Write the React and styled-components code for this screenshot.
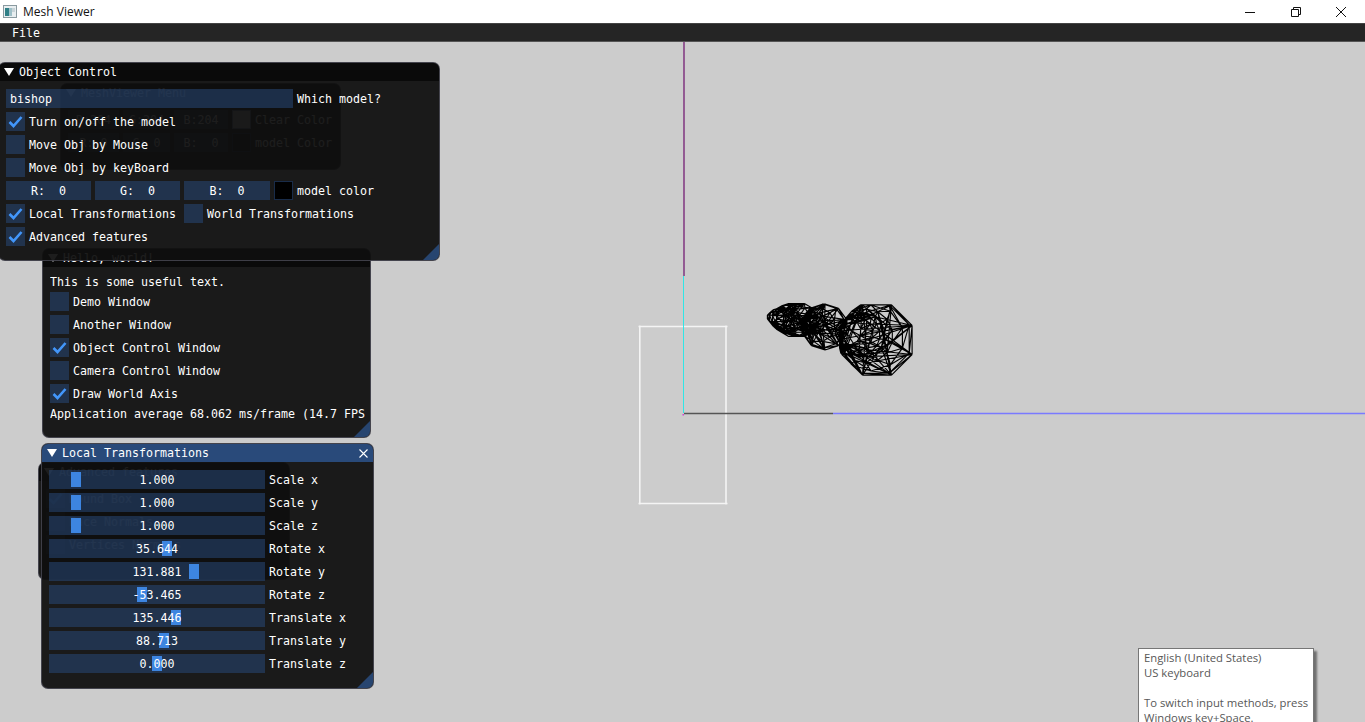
import React from "react";
import styled, { createGlobalStyle } from "styled-components";

const GlobalStyle = createGlobalStyle`
  html, body { margin: 0; padding: 0; height: 100%; overflow: hidden; background: #ccc; }
  * { box-sizing: border-box; }
`;

const Shell = styled.div`
  width: 1365px;
  height: 722px;
  display: flex;
  flex-direction: column;
  overflow: hidden;
`;

const TitleBar = styled.div`
  height: 23px;
  flex: none;
  background: #fff;
  display: flex;
  align-items: center;
  padding: 0 1px 0 3px;
  font-family: "Open Sans", "Noto Sans", sans-serif;
  font-size: 12px;
  color: #111;
`;

const AppName = styled.span`
  margin-left: 6px;
  flex: 1;
`;

const WinButton = styled.div`
  width: 45.5px;
  height: 23px;
  display: flex;
  align-items: center;
  justify-content: center;
`;

const MenuBar = styled.div`
  height: 19px;
  flex: none;
  background: #252525;
  border-top: 1px solid #444;
  border-bottom: 1px solid #555;
  padding-left: 12px;
  display: flex;
  align-items: center;
  font-family: "DejaVu Sans Mono", monospace;
  font-size: 11.63px;
  color: #fff;
`;

const Viewport = styled.div`
  position: relative;
  flex: 1;
  background: #ccc;
  font-family: "DejaVu Sans Mono", monospace;
  font-size: 11.63px;
  color: #fff;
  white-space: pre;
`;

const Scene = styled.svg`
  position: absolute;
  left: 0;
  top: 0;
`;

const Win = styled.div`
  position: absolute;
  left: ${(p) => p.$left}px;
  top: ${(p) => p.$top}px;
  width: ${(p) => p.$width}px;
  height: ${(p) => p.$height}px;
  background: rgba(15, 15, 15, 0.94);
  border: 1px solid rgba(110, 110, 128, 0.5);
  border-radius: 7px;
  overflow: hidden;
`;

const WinTitle = styled.div`
  height: 18px;
  display: flex;
  align-items: center;
  padding-left: 5px;
  gap: 5px;
  background: ${(p) => (p.$active ? "#294a7a" : "#0a0a0a")};
`;

const Arrow = styled.span`
  width: 10px;
  height: 8px;
  flex: none;
  background: #fff;
  clip-path: polygon(0 0, 100% 0, 50% 100%);
`;

const TitleText = styled.span`
  flex: 1;
`;

const CloseGlyph = styled.svg`
  margin-right: 5px;
  flex: none;
`;

const WinBody = styled.div`
  padding: 8px 5px 0 7px;
  display: flex;
  flex-direction: column;
  gap: 4px;
`;

const Row = styled.div`
  display: flex;
  align-items: center;
  gap: ${(p) => p.$gap ?? 4}px;
  height: 19px;
`;

const TextLine = styled.div`
  height: 13px;
  line-height: 15px;
  overflow: hidden;
`;

const Frame = styled.div`
  position: relative;
  width: ${(p) => p.$width}px;
  height: 19px;
  flex: none;
  background: rgba(41, 74, 122, 0.54);
  display: flex;
  align-items: center;
  justify-content: ${(p) => (p.$left ? "flex-start" : "center")};
  padding-left: ${(p) => (p.$left ? 4 : 0)}px;
`;

const Box = styled.div`
  width: 19px;
  height: 19px;
  flex: none;
  background: rgba(41, 74, 122, 0.54);
  display: flex;
  align-items: center;
  justify-content: center;
`;

const Swatch = styled.div`
  width: 19px;
  height: 19px;
  flex: none;
  background: ${(p) => p.$color};
  border: 1px solid rgba(41, 74, 122, 0.6);
`;

const Grab = styled.div`
  position: absolute;
  left: ${(p) => p.$at}px;
  top: 2px;
  width: 10px;
  height: 15px;
  background: #3d85e0;
`;

const SliderValue = styled.span`
  position: relative;
`;

const Grip = styled.div`
  position: absolute;
  right: 0;
  bottom: 0;
  width: 16px;
  height: 16px;
  background: #294a7a;
  opacity: 0.9;
  clip-path: polygon(100% 0, 100% 100%, 0 100%);
`;

const Tooltip = styled.div`
  position: absolute;
  left: 1138px;
  top: 606px;
  width: 176px;
  height: 120px;
  background: #fff;
  border: 1px solid #767676;
  box-shadow: 3px 3px 2px rgba(0, 0, 0, 0.45);
  padding: 1px 5px;
  font-family: "Open Sans", "Noto Sans", sans-serif;
  font-size: 11.3px;
  line-height: 15px;
  color: #575757;
`;

const TipLine = styled.div`
  height: 15px;
`;

const Check = () => (
  <svg width="15" height="13" viewBox="0 0 15 13">
    <path d="M1.5 7 L5.5 11 L13.5 2" fill="none" stroke="#4296fa" strokeWidth="2.6" />
  </svg>
);

const CheckRow = ({ checked, children }) => (
  <Row>
    <Box>{checked && <Check />}</Box>
    <span>{children}</span>
  </Row>
);

const Title = ({ active, close, children }) => (
  <WinTitle $active={active}>
    <Arrow />
    <TitleText>{children}</TitleText>
    {close && (
      <CloseGlyph width="9" height="9" viewBox="0 0 9 9">
        <path d="M0.5 0.5 L8.5 8.5 M8.5 0.5 L0.5 8.5" stroke="#fff" strokeWidth="1.1" />
      </CloseGlyph>
    )}
  </WinTitle>
);

const sliders = [
  ["1.000", 22, "Scale x"],
  ["1.000", 22, "Scale y"],
  ["1.000", 22, "Scale z"],
  ["35.644", 113, "Rotate x"],
  ["131.881", 140, "Rotate y"],
  ["-53.465", 88, "Rotate z"],
  ["135.446", 122, "Translate x"],
  ["88.713", 110, "Translate y"],
  ["0.000", 103, "Translate z"],
];

// wireframe of the bishop, rings along its axis joined by quads and diagonals
const rings = [
  [
    [877, 340, 38, 8],
    [875, 339, 37, 8],
    [871, 338, 33, 10],
    [866, 336, 27, 14],
    [863, 335, 22, 16],
    [860, 335, 20, 16],
    [856, 334, 17, 16],
    [848, 332, 13, 12],
  ],
  [
    [825, 327, 23, 10],
    [823, 326, 22, 10],
    [818, 325, 17, 12],
    [814, 323, 11, 14],
    [812, 323, 7, 12],
    [811, 322, 4, 10],
  ],
  [
    [800, 320, 17, 12],
    [793, 320, 17, 12],
    [786, 319, 14, 12],
    [779, 318, 10, 10],
    [772, 317, 5, 8],
  ],
];

const ringPoints = ([cx, cy, r, n]) =>
  Array.from({ length: n }, (_, i) => {
    const a = ((i + 0.5) / n) * Math.PI * 2;
    return [cx + r * Math.cos(a), cy + r * Math.sin(a)];
  });

const buildMesh = () => {
  let d = "";
  let seed = 7;
  const rand = (n) => {
    seed = (seed * 16807) % 2147483647;
    return seed % n;
  };
  const seg = (a, b) => {
    d += `M${a[0].toFixed(1)} ${a[1].toFixed(1)}L${b[0].toFixed(1)} ${b[1].toFixed(1)}`;
  };
  rings.forEach((group) => {
    group.forEach((ring, g) => {
      const pts = ringPoints(ring);
      pts.forEach((p, i) => seg(p, pts[(i + 1) % pts.length]));
      if (g + 1 < group.length) {
        const next = ringPoints(group[g + 1]);
        pts.forEach((p, i) => {
          const j = Math.round((i * next.length) / pts.length);
          seg(p, next[j % next.length]);
          seg(p, next[(j + 1) % next.length]);
        });
      }
    });
    // stray triangles inside each section
    const a = ringPoints(group[0]);
    const b = ringPoints(group[Math.floor(group.length / 2)]);
    for (let i = 0; i < a.length * 5; i++) {
      seg(a[rand(a.length)], b[rand(b.length)]);
    }
  });
  // long chords across the open end of the base
  const outer = ringPoints(rings[0][0]);
  const inner = ringPoints(rings[0][3]);
  outer.forEach((p, i) => {
    seg(p, inner[(i * 2 + 3) % inner.length]);
    seg(p, inner[(i * 2 + 9) % inner.length]);
  });
  return d;
};

const meshPath = buildMesh();

export default function App() {
  return (
    <Shell>
      <GlobalStyle />
      <TitleBar>
        <svg width="14" height="13" viewBox="0 0 14 13">
          <rect x="0.5" y="0.5" width="13" height="12" fill="#e8eef0" stroke="#8a9aa0" />
          <rect x="2" y="3" width="4" height="8" fill="#2f7f86" />
          <rect x="6" y="3" width="3" height="8" fill="#9fc0c8" />
          <rect x="9" y="3" width="3" height="4" fill="#c8d4d8" />
        </svg>
        <AppName>Mesh Viewer</AppName>
        <WinButton>
          <svg width="10" height="10" viewBox="0 0 10 10">
            <path d="M0 5.5 H10" stroke="#111" />
          </svg>
        </WinButton>
        <WinButton>
          <svg width="10" height="10" viewBox="0 0 10 10">
            <path d="M2.5 2.5 V0.5 H9.5 V7.5 H7.5 M0.5 2.5 H7.5 V9.5 H0.5 Z" fill="none" stroke="#111" />
          </svg>
        </WinButton>
        <WinButton>
          <svg width="10" height="10" viewBox="0 0 10 10">
            <path d="M0 0 L10 10 M10 0 L0 10" stroke="#111" />
          </svg>
        </WinButton>
      </TitleBar>
      <MenuBar>File</MenuBar>
      <Viewport>
        <Scene width="1365" height="680" viewBox="0 42 1365 680">
          <path
            d="M638.5 326.5 H727.5 M638.5 503.5 H727.5 M639.8 325.5 V504.5 M726 325.5 V504.5"
            fill="none"
            stroke="#f4f4f4"
            strokeWidth="1.6"
          />
          <path d="M684 42 V276" stroke="#7a2a7a" strokeWidth="1.4" />
          <path d="M683.5 276 V413" stroke="#2fe6e6" strokeWidth="1" />
          <path d="M684 413.5 H833" stroke="#555" strokeWidth="1.6" />
          <path d="M833 413.5 H1365" stroke="#7a7aff" strokeWidth="1.4" />
          <rect x="682.5" y="414" width="1.5" height="1.5" fill="#d040d0" />
          <path d={meshPath} fill="none" stroke="#000" strokeWidth="1.15" />
        </Scene>

        <Win $left={60} $top={41} $width={281} $height={87}>
          <Title>MeshViewer Menu</Title>
          <WinBody>
            <Row>
              <Frame $width={51}>R:204</Frame>
              <Frame $width={47}>G:204</Frame>
              <Frame $width={54}>B:204</Frame>
              <Swatch $color="#ccc" />
              <span>Clear Color</span>
            </Row>
            <Row>
              <Frame $width={51}>R: 0</Frame>
              <Frame $width={47}>G: 0</Frame>
              <Frame $width={54}>B:  0</Frame>
              <Swatch $color="#000" />
              <span>model Color</span>
            </Row>
          </WinBody>
        </Win>

        <Win $left={38} $top={420} $width={252} $height={118}>
          <Title>Advanced features</Title>
          <WinBody>
            <CheckRow checked>Bound Box</CheckRow>
            <CheckRow>Face Normals</CheckRow>
            <CheckRow>Vertices Normals</CheckRow>
          </WinBody>
        </Win>

        <Win $left={42} $top={206} $width={329} $height={190}>
          <Title>Hello, world!</Title>
          <WinBody>
            <TextLine>This is some useful text.</TextLine>
            <CheckRow>Demo Window</CheckRow>
            <CheckRow>Another Window</CheckRow>
            <CheckRow checked>Object Control Window</CheckRow>
            <CheckRow>Camera Control Window</CheckRow>
            <CheckRow checked>Draw World Axis</CheckRow>
            <TextLine>Application average 68.062 ms/frame (14.7 FPS)</TextLine>
          </WinBody>
          <Grip />
        </Win>

        <Win $left={-2} $top={20} $width={442} $height={199}>
          <Title>Object Control</Title>
          <WinBody>
            <Row>
              <Frame $width={287} $left>bishop</Frame>
              <span>Which model?</span>
            </Row>
            <CheckRow checked>Turn on/off the model</CheckRow>
            <CheckRow>Move Obj by Mouse</CheckRow>
            <CheckRow>Move Obj by keyBoard</CheckRow>
            <Row>
              <Frame $width={85}>R:  0</Frame>
              <Frame $width={85}>G:  0</Frame>
              <Frame $width={86}>B:  0</Frame>
              <Swatch $color="#000" />
              <span>model color</span>
            </Row>
            <Row $gap={8}>
              <CheckRow checked>Local Transformations</CheckRow>
              <CheckRow>World Transformations</CheckRow>
            </Row>
            <CheckRow checked>Advanced features</CheckRow>
          </WinBody>
          <Grip />
        </Win>

        <Win $left={41} $top={401} $width={333} $height={246}>
          <Title active close>Local Transformations</Title>
          <WinBody>
            {sliders.map(([value, at, label]) => (
              <Row key={label}>
                <Frame $width={216}>
                  <Grab $at={at} />
                  <SliderValue>{value}</SliderValue>
                </Frame>
                <span>{label}</span>
              </Row>
            ))}
          </WinBody>
          <Grip />
        </Win>

        <Tooltip>
          <TipLine>English (United States)</TipLine>
          <TipLine>US keyboard</TipLine>
          <TipLine />
          <TipLine>To switch input methods, press</TipLine>
          <TipLine>Windows key+Space.</TipLine>
        </Tooltip>
      </Viewport>
    </Shell>
  );
}
